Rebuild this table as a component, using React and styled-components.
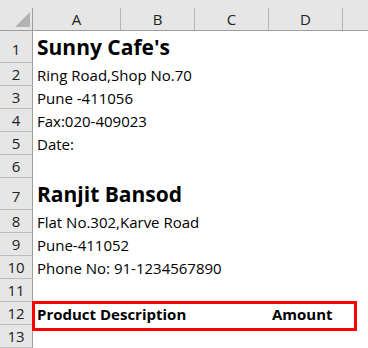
import React from 'react'
import styled, { createGlobalStyle } from 'styled-components'

const COLS = '33px 88px 74px 74px 74px 1fr'

const GlobalStyle = createGlobalStyle`
  body {
    margin: 0;
    background: #ffffff;
    font-family: 'Open Sans', 'Noto Sans', sans-serif;
  }
`

const Sheet = styled.div`
  position: relative;
  width: 368px;
  height: 348px;
  overflow: hidden;
  background: #ffffff;
  color: #000000;
`

const HeaderRow = styled.div`
  display: grid;
  grid-template-columns: ${COLS};
  height: 31px;
  background: #e6e6e6;
  border-bottom: 1px solid #9e9e9e;
  box-sizing: border-box;
`

const Corner = styled.div`
  position: relative;
  border-right: 1px solid #9e9e9e;
  margin-top: 8px;
  svg {
    position: absolute;
    left: 15px;
    top: 4px;
  }
`

const ColHead = styled.div`
  display: flex;
  align-items: center;
  justify-content: center;
  margin-top: 8px;
  font-size: 15px;
  color: #222222;
  border-right: ${(p) => (p.$last ? 'none' : '1px solid #b4b4b4')};
  padding-bottom: 1px;
`

const Row = styled.div`
  display: grid;
  grid-template-columns: ${COLS};
  height: ${(p) => (p.$tall ? 32 : 23)}px;
`

const RowHead = styled.div`
  display: flex;
  align-items: center;
  justify-content: center;
  background: #e6e6e6;
  border-right: 1px solid #9e9e9e;
  border-bottom: 1px solid #bdbdbd;
  font-size: 15px;
  color: #222222;
  padding-top: ${(p) => (p.$tall ? 4 : 0)}px;
`

const Cell = styled.div`
  display: flex;
  align-items: flex-end;
  padding: 0 0 ${(p) => (p.$big ? 2 : 1)}px ${(p) => p.$pad ?? 4}px;
  white-space: nowrap;
  overflow: visible;
  font-size: ${(p) => (p.$big ? 21 : 15)}px;
  line-height: ${(p) => (p.$big ? 28 : 20)}px;
  font-weight: ${(p) => (p.$bold ? 700 : 400)};
  grid-column: ${(p) => p.$span ?? 'auto'};
`

const Highlight = styled.div`
  position: absolute;
  left: 32px;
  top: 301px;
  width: 325px;
  height: 30px;
  border: 3px solid #ff0000;
  box-sizing: border-box;
  pointer-events: none;
`

const rows = [
  { n: 1, tall: true, text: "Sunny Cafe's", big: true },
  { n: 2, text: 'Ring Road,Shop No.70' },
  { n: 3, text: 'Pune -411056' },
  { n: 4, text: 'Fax:020-409023' },
  { n: 5, text: 'Date:' },
  { n: 6 },
  { n: 7, tall: true, text: 'Ranjit Bansod', big: true },
  { n: 8, text: 'Flat No.302,Karve Road' },
  { n: 9, text: 'Pune-411052' },
  { n: 10, text: 'Phone No: 91-1234567890' },
  { n: 11 },
  { n: 12, header: true },
  { n: 13 },
]

const App = () => (
  <>
    <GlobalStyle />
    <Sheet>
      <HeaderRow>
        <Corner>
          <svg width="15" height="15" viewBox="0 0 15 15">
            <polygon points="15,0 15,15 0,15" fill="#b3b3b3" />
          </svg>
        </Corner>
        <ColHead>A</ColHead>
        <ColHead>B</ColHead>
        <ColHead>C</ColHead>
        <ColHead>D</ColHead>
        <ColHead $last />
      </HeaderRow>
      {rows.map((r) => (
        <Row key={r.n} $tall={r.tall}>
          <RowHead $tall={r.tall}>{r.n}</RowHead>
          {r.header ? (
            <>
              <Cell $bold $span="span 3">Product Description</Cell>
              <Cell $bold $pad={3}>Amount</Cell>
            </>
          ) : (
            <Cell $bold={r.big} $big={r.big} $span="span 5">
              {r.text}
            </Cell>
          )}
        </Row>
      ))}
      <Highlight />
    </Sheet>
  </>
)

export default App
